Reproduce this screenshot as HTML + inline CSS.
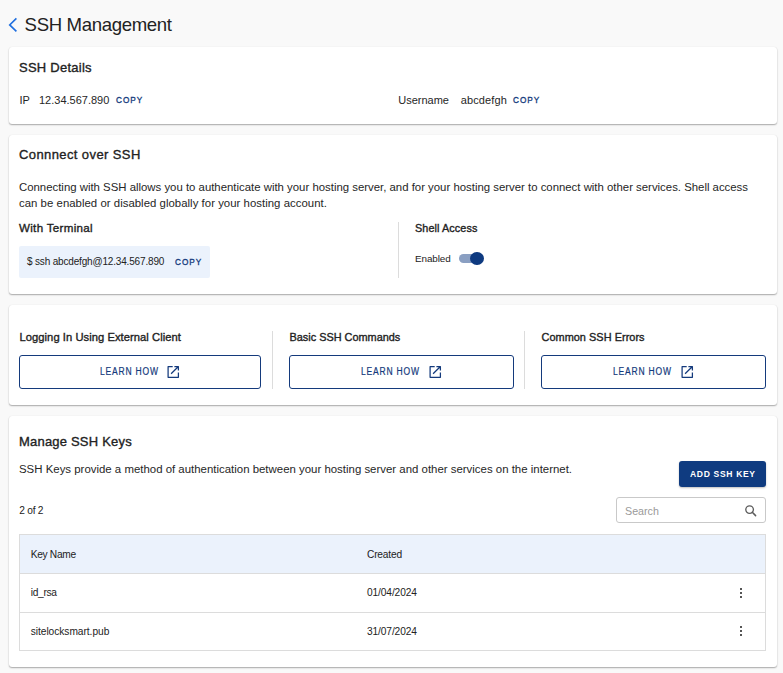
<!DOCTYPE html>
<html><head><meta charset="utf-8"><title>SSH Management</title>
<style>
html,body{margin:0;padding:0;}
body{width:783px;height:673px;background:#f9f9f9;position:relative;overflow:hidden;font-family:"Liberation Sans",sans-serif;}
.t{position:absolute;white-space:nowrap;}
.r{position:absolute;}
</style></head><body>
<div class="r" style="left:9px;top:47px;width:768px;height:77px;background:#fff;border-radius:3px;box-shadow:0 1px 1.5px rgba(0,0,0,0.32),0 0 1px rgba(0,0,0,0.10);"></div>
<div class="r" style="left:9px;top:135px;width:768px;height:159px;background:#fff;border-radius:3px;box-shadow:0 1px 1.5px rgba(0,0,0,0.32),0 0 1px rgba(0,0,0,0.10);"></div>
<div class="r" style="left:9px;top:305px;width:768px;height:100px;background:#fff;border-radius:3px;box-shadow:0 1px 1.5px rgba(0,0,0,0.32),0 0 1px rgba(0,0,0,0.10);"></div>
<div class="r" style="left:9px;top:416px;width:768px;height:251px;background:#fff;border-radius:3px;box-shadow:0 1px 1.5px rgba(0,0,0,0.32),0 0 1px rgba(0,0,0,0.10);"></div>
<svg class="r" style="left:0;top:0" width="30" height="40" viewBox="0 0 30 40"><polyline points="16.4,18.4 9.7,24.9 16.4,31.4" fill="none" stroke="#1f6fe0" stroke-width="1.6" stroke-linecap="butt" stroke-linejoin="miter"/></svg>
<div class="t" style="left:24.60px;top:16.16px;font-size:18.6px;font-weight:400;color:#222222;line-height:18.6px;letter-spacing:-0.35px;">SSH Management</div>
<div class="t" style="left:19.00px;top:61.00px;font-size:13px;font-weight:400;color:#222222;line-height:13px;letter-spacing:0.25px;-webkit-text-stroke:0.35px #222222;">SSH Details</div>
<div class="t" style="left:19.50px;top:94.69px;font-size:11px;font-weight:400;color:#262626;line-height:11px;">IP</div>
<div class="t" style="left:39.00px;top:94.69px;font-size:11px;font-weight:400;color:#262626;line-height:11px;">12.34.567.890</div>
<div class="t" style="left:115.80px;top:95.22px;font-size:9.9px;font-weight:400;color:#143a7c;line-height:9.9px;letter-spacing:1.25px;-webkit-text-stroke:0.35px #143a7c;transform:scaleX(0.83);transform-origin:0 0;">COPY</div>
<div class="t" style="left:398.20px;top:94.69px;font-size:11px;font-weight:400;color:#262626;line-height:11px;">Username</div>
<div class="t" style="left:460.80px;top:94.69px;font-size:11px;font-weight:400;color:#262626;line-height:11px;letter-spacing:0.1px;">abcdefgh</div>
<div class="t" style="left:513.40px;top:95.22px;font-size:9.9px;font-weight:400;color:#143a7c;line-height:9.9px;letter-spacing:1.25px;-webkit-text-stroke:0.35px #143a7c;transform:scaleX(0.83);transform-origin:0 0;">COPY</div>
<div class="t" style="left:19.00px;top:148.20px;font-size:13px;font-weight:400;color:#222222;line-height:13px;letter-spacing:0.4px;-webkit-text-stroke:0.35px #222222;">Connnect over SSH</div>
<div class="t" style="left:19.00px;top:182.37px;font-size:11.38px;font-weight:400;color:#262626;line-height:11.38px;">Connecting with SSH allows you to authenticate with your hosting server, and for your hosting server to connect with other services. Shell access</div>
<div class="t" style="left:19.00px;top:198.37px;font-size:11.38px;font-weight:400;color:#262626;line-height:11.38px;letter-spacing:0.03px;">can be enabled or disabled globally for your hosting account.</div>
<div class="t" style="left:19.00px;top:222.18px;font-size:11.6px;font-weight:400;color:#222222;line-height:11.6px;letter-spacing:0.3px;-webkit-text-stroke:0.35px #222222;">With Terminal</div>
<div class="r" style="left:19px;top:246px;width:191px;height:32px;background:#ebf2fc;border-radius:2px;"></div>
<div class="t" style="left:27.00px;top:256.54px;font-size:10px;font-weight:400;color:#222222;line-height:10px;letter-spacing:-0.17px;">$ ssh abcdefgh@12.34.567.890</div>
<div class="t" style="left:175.30px;top:256.82px;font-size:9.9px;font-weight:400;color:#143a7c;line-height:9.9px;letter-spacing:1.25px;-webkit-text-stroke:0.35px #143a7c;transform:scaleX(0.83);transform-origin:0 0;">COPY</div>
<div class="r" style="left:398px;top:222px;width:1px;height:56px;background:#dcdcdc;"></div>
<div class="t" style="left:415.00px;top:223.16px;font-size:10.8px;font-weight:400;color:#222222;line-height:10.8px;letter-spacing:0.1px;-webkit-text-stroke:0.35px #222222;">Shell Access</div>
<div class="t" style="left:415.00px;top:253.62px;font-size:9.9px;font-weight:400;color:#222222;line-height:9.9px;letter-spacing:-0.1px;">Enabled</div>
<div class="r" style="left:459px;top:254px;width:24px;height:9px;background:#8a9fc2;border-radius:5px;"></div>
<div class="r" style="left:470px;top:252px;width:13.600000000000023px;height:13px;background:#0e3a80;border-radius:50%;"></div>
<div class="t" style="left:19.50px;top:331.92px;font-size:11.2px;font-weight:400;color:#222222;line-height:11.2px;letter-spacing:0.05px;-webkit-text-stroke:0.35px #222222;">Logging In Using External Client</div>
<div class="r" style="left:19px;top:355px;width:242px;height:34px;border:1.5px solid #143a7c;border-radius:3px;box-sizing:border-box;"></div>
<div class="t" style="left:99.90px;top:366.54px;font-size:10px;font-weight:400;color:#143a7c;line-height:10px;letter-spacing:0.95px;-webkit-text-stroke:0.2px #143a7c;transform:scaleX(0.85);transform-origin:0 0;">LEARN HOW</div>
<svg class="r" style="left:164.0px;top:363px" width="18" height="18" viewBox="0 0 18 18"><path d="M8.7 3.5H4.1V14.3H14.4V9.4" fill="none" stroke="#143a7c" stroke-width="1.25" stroke-linejoin="round"/><path d="M10.4 3.5H14.4V7.6M14.4 3.5L7.1 10.7" fill="none" stroke="#143a7c" stroke-width="1.25" stroke-linejoin="round"/></svg>
<div class="t" style="left:289.50px;top:332.17px;font-size:10.9px;font-weight:400;color:#222222;line-height:10.9px;-webkit-text-stroke:0.35px #222222;">Basic SSH Commands</div>
<div class="r" style="left:289px;top:355px;width:225px;height:34px;border:1.5px solid #143a7c;border-radius:3px;box-sizing:border-box;"></div>
<div class="t" style="left:361.40px;top:366.54px;font-size:10px;font-weight:400;color:#143a7c;line-height:10px;letter-spacing:0.95px;-webkit-text-stroke:0.2px #143a7c;transform:scaleX(0.85);transform-origin:0 0;">LEARN HOW</div>
<svg class="r" style="left:425.5px;top:363px" width="18" height="18" viewBox="0 0 18 18"><path d="M8.7 3.5H4.1V14.3H14.4V9.4" fill="none" stroke="#143a7c" stroke-width="1.25" stroke-linejoin="round"/><path d="M10.4 3.5H14.4V7.6M14.4 3.5L7.1 10.7" fill="none" stroke="#143a7c" stroke-width="1.25" stroke-linejoin="round"/></svg>
<div class="t" style="left:541.50px;top:332.17px;font-size:10.9px;font-weight:400;color:#222222;line-height:10.9px;letter-spacing:0.05px;-webkit-text-stroke:0.35px #222222;">Common SSH Errors</div>
<div class="r" style="left:541px;top:355px;width:225px;height:34px;border:1.5px solid #143a7c;border-radius:3px;box-sizing:border-box;"></div>
<div class="t" style="left:613.40px;top:366.54px;font-size:10px;font-weight:400;color:#143a7c;line-height:10px;letter-spacing:0.95px;-webkit-text-stroke:0.2px #143a7c;transform:scaleX(0.85);transform-origin:0 0;">LEARN HOW</div>
<svg class="r" style="left:677.5px;top:363px" width="18" height="18" viewBox="0 0 18 18"><path d="M8.7 3.5H4.1V14.3H14.4V9.4" fill="none" stroke="#143a7c" stroke-width="1.25" stroke-linejoin="round"/><path d="M10.4 3.5H14.4V7.6M14.4 3.5L7.1 10.7" fill="none" stroke="#143a7c" stroke-width="1.25" stroke-linejoin="round"/></svg>
<div class="r" style="left:272px;top:331px;width:1px;height:58px;background:#dcdcdc;"></div>
<div class="r" style="left:524px;top:331px;width:1px;height:58px;background:#dcdcdc;"></div>
<div class="t" style="left:19.00px;top:435.40px;font-size:13px;font-weight:400;color:#222222;line-height:13px;letter-spacing:0.2px;-webkit-text-stroke:0.35px #222222;">Manage SSH Keys</div>
<div class="t" style="left:19.00px;top:464.12px;font-size:11.43px;font-weight:400;color:#262626;line-height:11.43px;">SSH Keys provide a method of authentication between your hosting server and other services on the internet.</div>
<div class="r" style="left:679px;top:461px;width:87px;height:26px;background:#0f3b80;border-radius:3px;box-shadow:0 1px 2px rgba(0,0,0,0.25);"></div>
<div class="t" style="left:689.80px;top:469.17px;font-size:9.6px;font-weight:700;color:#fff;line-height:9.6px;letter-spacing:0.75px;transform:scaleX(0.89);transform-origin:0 0;">ADD SSH KEY</div>
<div class="r" style="left:616px;top:497px;width:150px;height:26px;border:1px solid #c9c9c9;border-radius:3px;box-sizing:border-box;background:#fff;"></div>
<div class="t" style="left:625.00px;top:506.44px;font-size:10.7px;font-weight:400;color:#9a9a9a;line-height:10.7px;">Search</div>
<svg class="r" style="left:744px;top:504px" width="13" height="13" viewBox="0 0 13 13"><circle cx="5.6" cy="5.6" r="3.8" fill="none" stroke="#5c5c5c" stroke-width="1.35"/><path d="M8.3 8.3l3.3 3.3" stroke="#5c5c5c" stroke-width="1.5" stroke-linecap="round"/></svg>
<div class="t" style="left:19.30px;top:505.67px;font-size:10.2px;font-weight:400;color:#222222;line-height:10.2px;letter-spacing:-0.25px;">2 of 2</div>
<div class="r" style="left:19px;top:534px;width:747px;height:117px;border:1px solid #dcdcdc;box-sizing:border-box;"></div>
<div class="r" style="left:20px;top:535px;width:745px;height:38px;background:#ebf2fc;"></div>
<div class="r" style="left:20px;top:573px;width:745px;height:1px;background:#dcdcdc;"></div>
<div class="r" style="left:20px;top:612px;width:745px;height:1px;background:#dcdcdc;"></div>
<div class="t" style="left:30.70px;top:550.17px;font-size:10.2px;font-weight:400;color:#222222;line-height:10.2px;letter-spacing:-0.3px;">Key Name</div>
<div class="t" style="left:367.00px;top:550.17px;font-size:10.2px;font-weight:400;color:#222222;line-height:10.2px;letter-spacing:-0.2px;">Created</div>
<div class="t" style="left:30.70px;top:588.17px;font-size:10.2px;font-weight:400;color:#222222;line-height:10.2px;letter-spacing:-0.3px;">id_rsa</div>
<div class="t" style="left:367.00px;top:588.17px;font-size:10.2px;font-weight:400;color:#222222;line-height:10.2px;letter-spacing:-0.12px;">01/04/2024</div>
<div class="t" style="left:30.70px;top:627.17px;font-size:10.2px;font-weight:400;color:#222222;line-height:10.2px;letter-spacing:-0.04px;">sitelocksmart.pub</div>
<div class="t" style="left:367.00px;top:627.17px;font-size:10.2px;font-weight:400;color:#222222;line-height:10.2px;letter-spacing:-0.12px;">31/07/2024</div>
<div class="r" style="left:740px;top:588px;width:2px;height:2px;background:#555;"></div>
<div class="r" style="left:740px;top:592px;width:2px;height:2px;background:#555;"></div>
<div class="r" style="left:740px;top:596px;width:2px;height:2px;background:#555;"></div>
<div class="r" style="left:740px;top:626px;width:2px;height:2px;background:#555;"></div>
<div class="r" style="left:740px;top:630px;width:2px;height:2px;background:#555;"></div>
<div class="r" style="left:740px;top:634px;width:2px;height:2px;background:#555;"></div>
</body></html>
